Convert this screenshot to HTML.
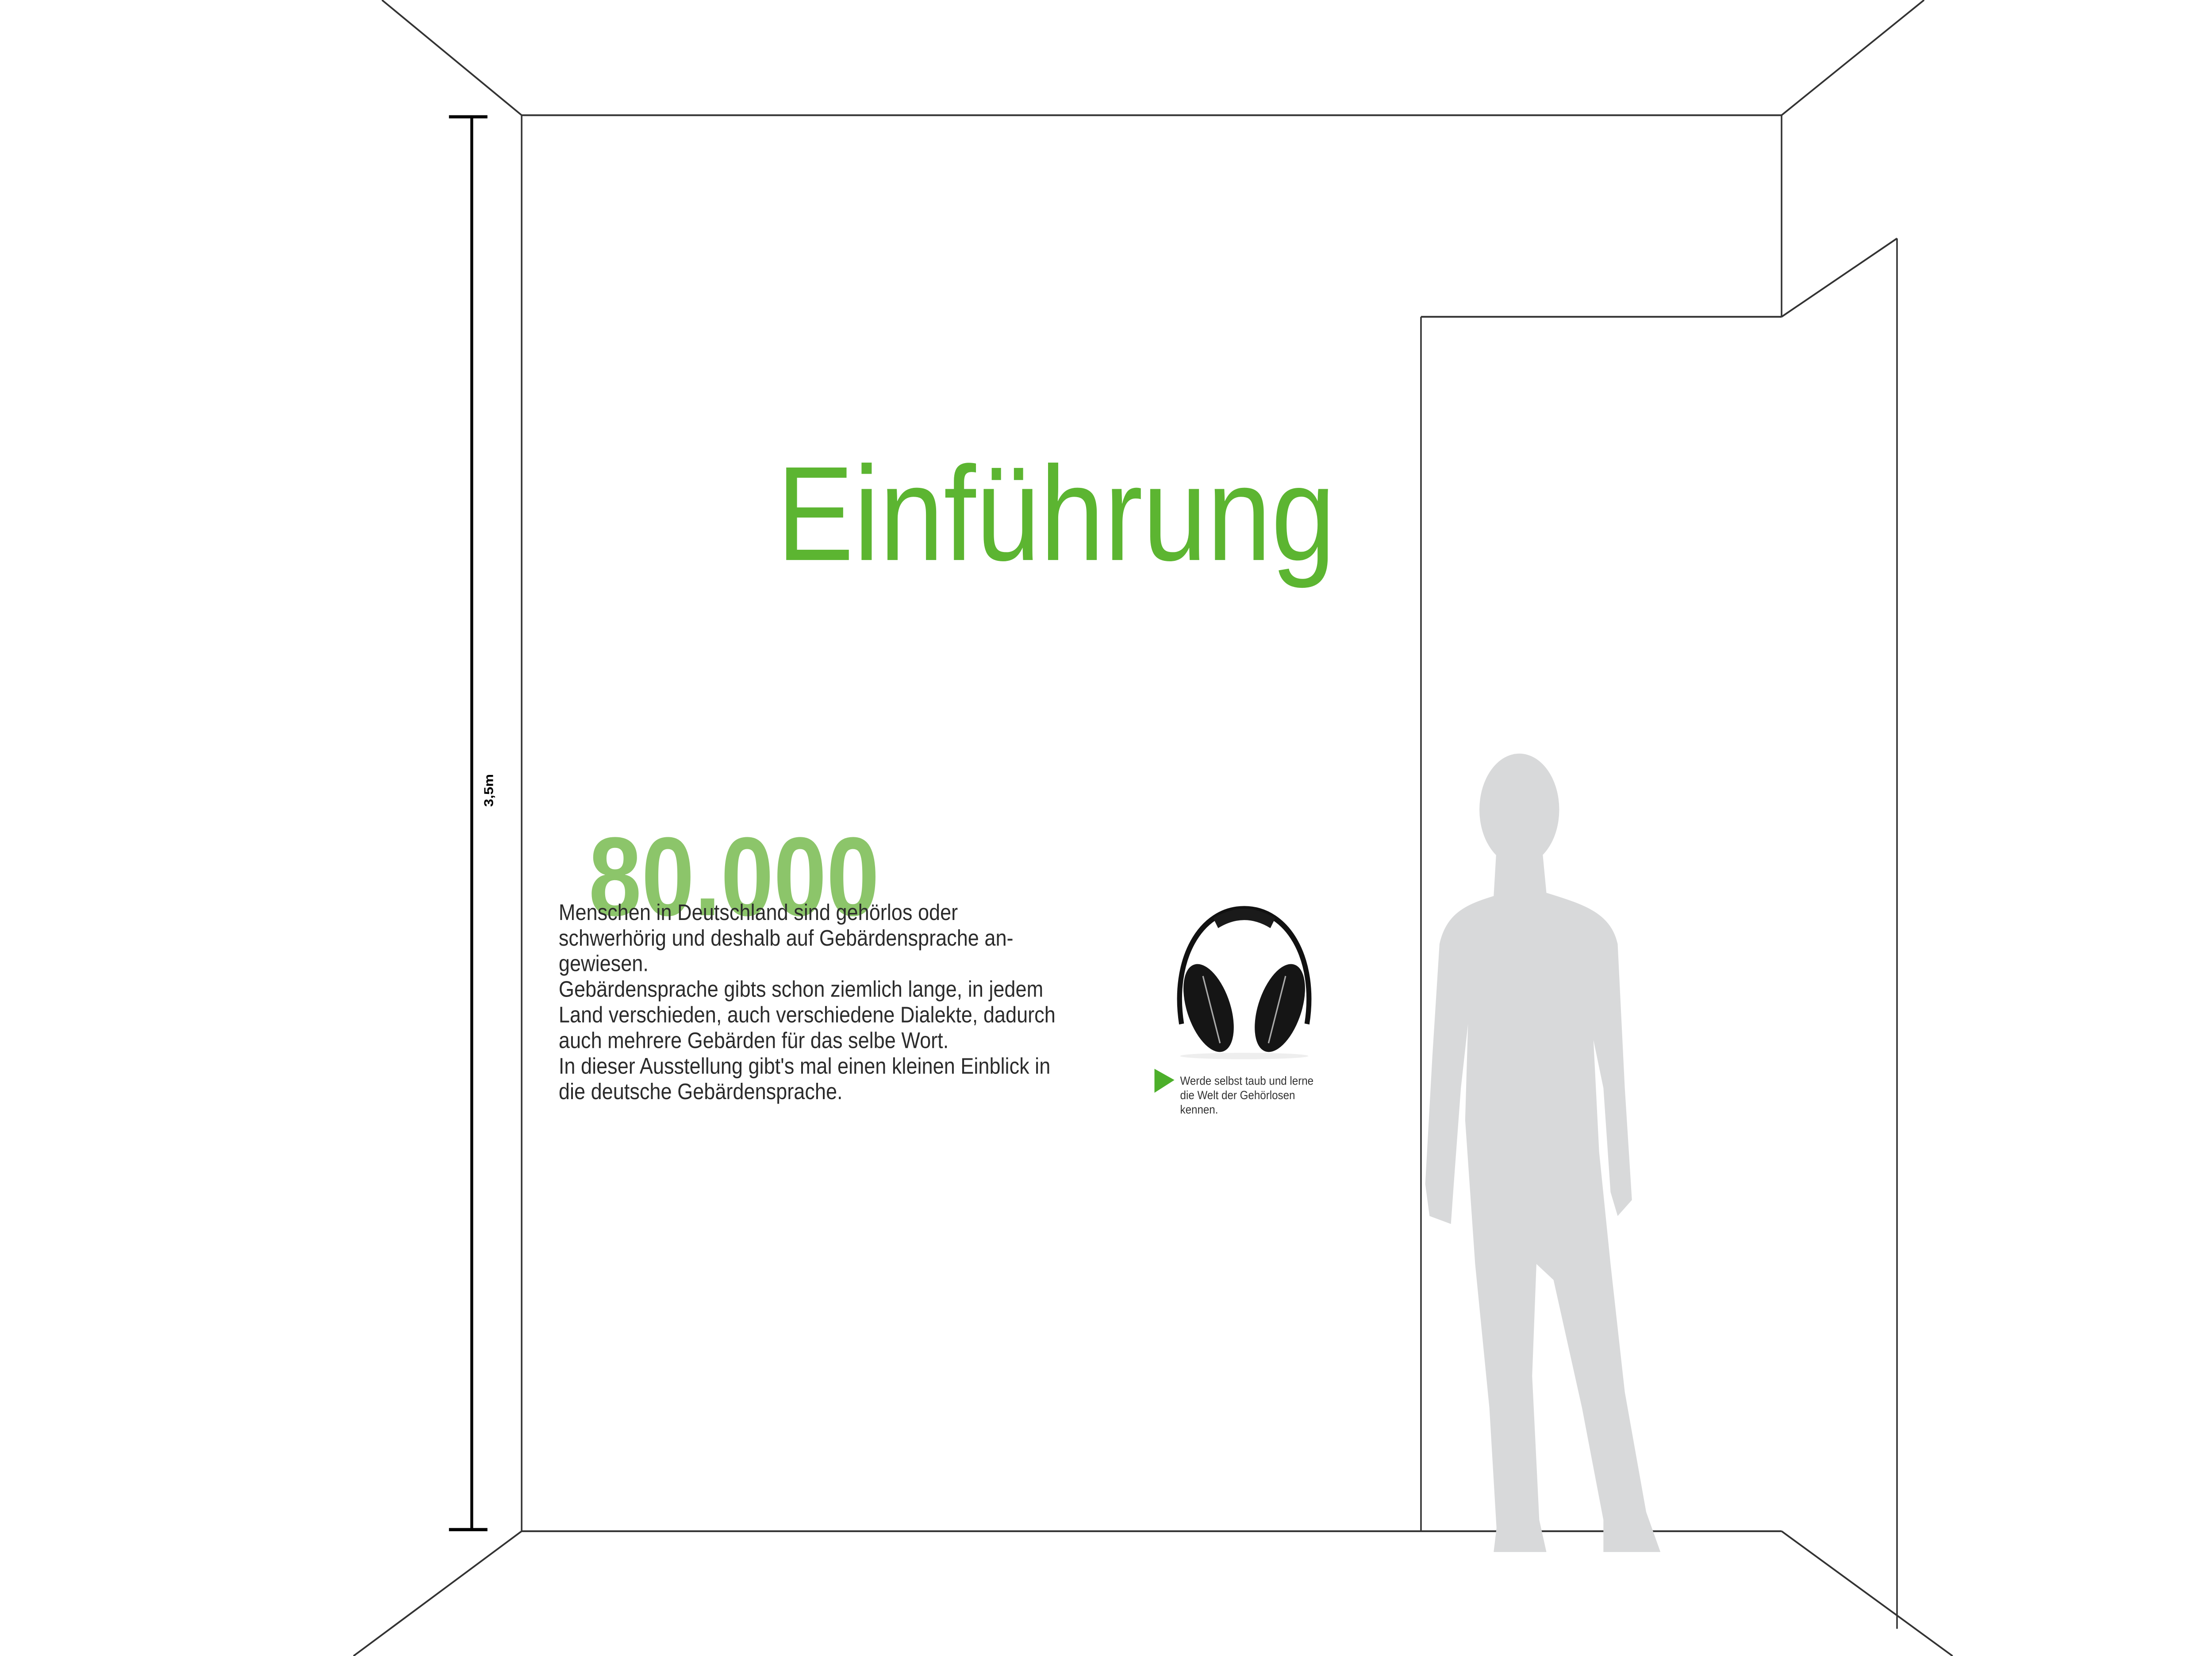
<!DOCTYPE html>
<html><head><meta charset="utf-8"><style>
html,body{margin:0;padding:0;background:#fff;width:100%;height:100%;overflow:hidden;}
svg{display:block;position:fixed;left:0;top:0;width:100%;height:100%;}
</style></head><body>
<svg viewBox="0 0 1552 1035" preserveAspectRatio="none" xmlns="http://www.w3.org/2000/svg">
<rect width="1552" height="1035" fill="#fff"/>
<g stroke="#333" stroke-width="1.1" fill="none">
<line x1="268" y1="0" x2="366" y2="72"/>
<line x1="1350" y1="0" x2="1250" y2="72"/>
<line x1="366" y1="72" x2="1250" y2="72"/>
<line x1="366" y1="72" x2="366" y2="957"/>
<line x1="366" y1="957" x2="1250" y2="957"/>
<line x1="366" y1="957" x2="248" y2="1035"/>
<line x1="1250" y1="957" x2="1370" y2="1035"/>
<line x1="1250" y1="72" x2="1250" y2="198"/>
<line x1="997" y1="198" x2="1250" y2="198"/>
<line x1="997" y1="198" x2="997" y2="957"/>
<line x1="1250" y1="198" x2="1331" y2="149"/>
<line x1="1331" y1="149" x2="1331" y2="1018"/>
</g>
<g stroke="#000" stroke-width="2">
<line x1="331" y1="73" x2="331" y2="956"/>
<line x1="315" y1="73" x2="342" y2="73"/>
<line x1="315" y1="956" x2="342" y2="956"/>
</g>
<text x="0" y="0" transform="translate(346,494) rotate(-90)" text-anchor="middle" font-family="Liberation Sans, sans-serif" font-weight="bold" font-size="9" fill="#000">3,5m</text>
<text x="545" y="350" font-family="Liberation Sans, sans-serif" font-size="84" fill="#5cb531" textLength="392" lengthAdjust="spacingAndGlyphs">Einführung</text>
<text x="413" y="572" font-family="Liberation Sans, sans-serif" font-weight="bold" font-size="70" fill="#8cc56a" textLength="204" lengthAdjust="spacingAndGlyphs">80.000</text>
<g font-family="Liberation Sans, sans-serif" font-size="14" fill="#2b2b2b">
<text x="392" y="575">Menschen in Deutschland sind gehörlos oder</text>
<text x="392" y="591">schwerhörig und deshalb auf Gebärdensprache an-</text>
<text x="392" y="607">gewiesen.</text>
<text x="392" y="623">Gebärdensprache gibts schon ziemlich lange, in jedem</text>
<text x="392" y="639">Land verschieden, auch verschiedene Dialekte, dadurch</text>
<text x="392" y="655">auch mehrere Gebärden für das selbe Wort.</text>
<text x="392" y="671">In dieser Ausstellung gibt's mal einen kleinen Einblick in</text>
<text x="392" y="687">die deutsche Gebärdensprache.</text>
</g>
<ellipse cx="873" cy="660" rx="45" ry="2" fill="#eee"/>
<path d="M829,640 C822,600 842,568 873,568 C904,568 924,600 917,640" stroke="#111" stroke-width="3.5" fill="none"/>
<path d="M853,577 Q873,566 893,577" stroke="#1a1a1a" stroke-width="7" fill="none"/>
<ellipse cx="848" cy="630" rx="15" ry="29" transform="rotate(-22 848 630)" fill="#151515"/>
<ellipse cx="898" cy="630" rx="15" ry="29" transform="rotate(22 898 630)" fill="#151515"/>
<path d="M844,610 L856,652" stroke="#aaa" stroke-width="1"/>
<path d="M902,610 L890,652" stroke="#aaa" stroke-width="1"/>
<polygon points="810,668 824,675 810,683" fill="#4caf2a"/>
<g font-family="Liberation Sans, sans-serif" font-size="7.5" fill="#333">
<text x="828" y="678">Werde selbst taub und lerne</text>
<text x="828" y="687">die Welt der Gehörlosen</text>
<text x="828" y="696">kennen.</text>
</g>
<g fill="#d8d9da">
<ellipse cx="1066" cy="506" rx="28" ry="35"/>
<path d="M1050,530 L1048,560 C1030,565 1015,570 1010,590 L1005,660 L1000,740 L1003,760 L1018,765 L1020,740 L1025,680 L1030,640 L1028,700 L1035,790 L1045,880 L1050,955 L1048,970 L1085,970 L1080,950 L1075,860 L1078,790 L1090,800 L1110,880 L1125,950 L1125,970 L1165,970 L1155,945 L1140,870 L1130,790 L1122,720 L1118,650 L1125,680 L1130,745 L1135,760 L1145,750 L1140,680 L1135,590 C1130,570 1110,565 1085,558 L1082,530 Z"/>
</g>
</svg>
</body></html>
